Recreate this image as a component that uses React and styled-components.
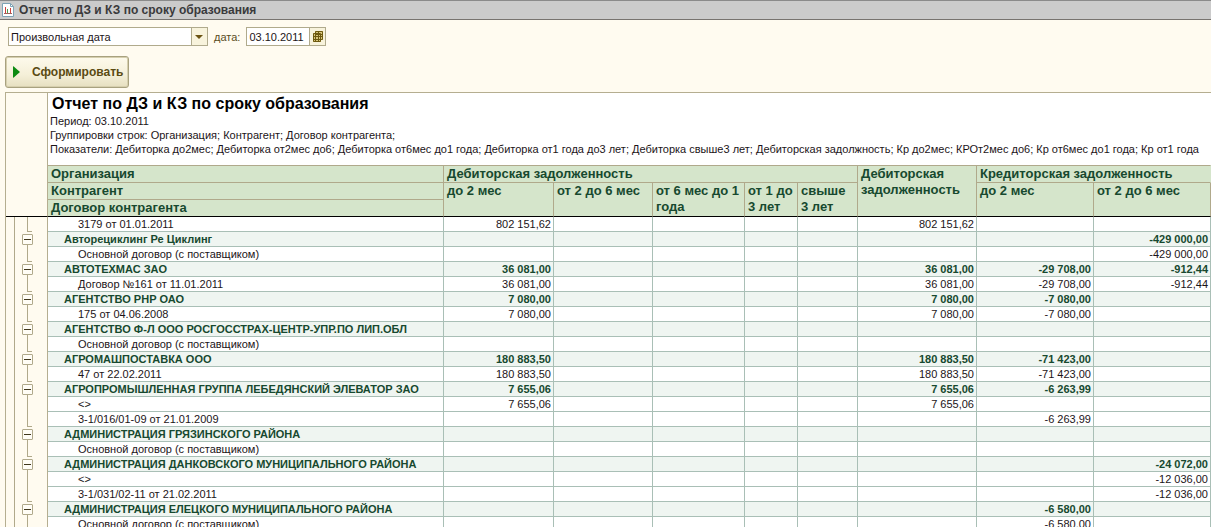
import React from "react";
import styled, { createGlobalStyle } from "styled-components";

const GlobalStyle = createGlobalStyle`
  * {
    box-sizing: border-box;
  }

  body {
    margin: 0;
    background: #fffbf0;
    font-family: "Liberation Sans", Arial, sans-serif;
    font-size: 11px;
    color: #1c1418;
  }

  button,
  input,
  select {
    font: inherit;
    color: inherit;
  }

  svg {
    flex: none;
  }
`;

const Window = styled.div`
  display: flex;
  flex-direction: column;
  height: 100vh;
  overflow: hidden;
`;

const TitleBar = styled.header`
  display: flex;
  flex: none;
  align-items: center;
  gap: 5px;
  height: 20px;
  padding: 0 2px;
  background: #cbcbcb;
  border-top: 1px solid #8a8a8a;
  border-bottom: 1px solid #77736f;
`;

const WindowTitle = styled.h1`
  margin: 0;
  font-size: 12px;
  font-weight: 700;
  line-height: 16px;
  color: #3a3a3c;
  white-space: nowrap;
`;

const Filters = styled.form`
  display: flex;
  flex: none;
  align-items: center;
  padding: 7px 8px 0;
`;

const SelectBox = styled.div`
  display: grid;
  grid-template-columns: 1fr 16px;
  width: 200px;
  height: 19px;
  border: 1px solid #b0aa8c;
  background: #fffbf0;
`;

const Select = styled.select`
  grid-row: 1;
  grid-column: 1 / -1;
  appearance: none;
  padding: 0 18px 0 2px;
  border: 0;
  outline: 0;
  background: linear-gradient(
    to left,
    #f8f3dc 15px,
    #b0aa8c 15px,
    #b0aa8c 16px,
    #ffffff 16px
  );
`;

const SelectArrow = styled.svg`
  grid-row: 1;
  grid-column: 2;
  place-self: center;
  pointer-events: none;
`;

const FieldLabel = styled.label`
  padding: 0 6px;
  color: #5a4d1e;
`;

const DateBox = styled.div`
  display: flex;
  width: 80px;
  height: 19px;
  border: 1px solid #b0aa8c;
  background: #ffffff;
`;

const DateInput = styled.input`
  flex: 1;
  min-width: 0;
  padding: 0 2px;
  border: 0;
  outline: 0;
  background: transparent;
`;

const CalendarButton = styled.button`
  display: flex;
  align-items: center;
  justify-content: center;
  width: 16px;
  padding: 0;
  border: 0;
  border-left: 1px solid #b0aa8c;
  background: #f8f3dc;
`;

const Actions = styled.div`
  display: flex;
  flex: none;
  padding: 10px 5px 4px;
`;

const RunButton = styled.button`
  display: flex;
  align-items: center;
  gap: 12px;
  width: 124px;
  height: 32px;
  padding: 0 4px 0 7px;
  border: 1px solid #a8a17f;
  border-radius: 3px;
  background: linear-gradient(#fdfaec, #f4efd8 60%, #e6dfc0);
  box-shadow: inset 0 0 0 1px #d6cfae;
  font-size: 12px;
  font-weight: 700;
  color: #5a4a12;
  white-space: nowrap;
`;

const Sheet = styled.main`
  flex: 1;
  min-height: 0;
  overflow: hidden;
  margin-left: 5px;
  border-top: 1px solid #b5ae90;
  border-left: 1px solid #b5ae90;
`;

const ReportHead = styled.div`
  display: grid;
  grid-template-columns: 42px 1fr;
  height: 72px;
`;

const ReportGutter = styled.div`
  background: #fffbf0;
  border-right: 1px solid #b5ae90;
`;

const ReportInfo = styled.div`
  min-width: 0;
  overflow: hidden;
  padding: 1px 2px 0;
  background: #ffffff;
`;

const ReportTitle = styled.h2`
  margin: 0;
  padding-left: 2px;
  font-size: 16px;
  line-height: 20px;
  color: #000000;
  white-space: nowrap;
`;

const InfoLine = styled.p`
  margin: 0;
  line-height: 14px;
  white-space: nowrap;
`;

const Table = styled.table`
  width: 100%;
  min-width: 1205px;
  table-layout: fixed;
  border-collapse: separate;
  border-spacing: 0;
  background: #ffffff;
`;

const HeadCell = styled.th`
  height: 17px;
  padding: 0 3px;
  border-right: 1px solid ${(p) => (p.$open ? "#d5e5cb" : "#b0a98b")};
  border-bottom: 1px solid ${(p) => (p.$last ? "#000000" : "#b0a98b")};
  background: #d5e5cb;
  font-size: 13px;
  line-height: 16px;
  font-weight: 700;
  text-align: left;
  vertical-align: top;
  color: #17492f;
`;

const HeadRow = styled.tr`
  &:first-child > th {
    border-top: 1px solid #b0a98b;
    height: 18px;
  }
`;

const HeadGutter = styled.td`
  padding: 0;
  border-right: 1px solid #b5ae90;
  border-bottom: 1px solid #000000;
  background: #fffbf0;
`;

const GutterCell = styled.td`
  height: 15px;
  padding: 0;
  border-right: 1px solid #b5ae90;
  background: #fffbf0;
`;

const Rails = styled.div`
  display: flex;
  height: 15px;
  padding-left: 8px;
`;

const OuterRail = styled.span`
  width: 8px;
  border-left: 1px solid #b0a98b;
`;

const Branch = styled.span`
  width: 5px;
  margin-left: 5px;
  border-left: 1px solid #b0a98b;
  border-bottom: ${(p) => (p.$end ? "1px solid #b0a98b" : "0")};
`;

const Node = styled.span`
  display: flex;
  flex-direction: column;
  align-items: center;
  padding-top: 2px;

  &::after {
    content: "";
    width: 1px;
    flex: 1;
    background: #b0a98b;
  }
`;

const Toggle = styled.button`
  display: flex;
  align-items: center;
  justify-content: center;
  width: 11px;
  height: 11px;
  padding: 0;
  border: 1px solid #b0a98b;
  border-radius: 1px;
  background: #fffdf6;

  &::before {
    content: "";
    width: 7px;
    height: 1px;
    background: #40371c;
  }
`;

const NameCell = styled.td`
  height: 15px;
  padding: 0 0 0 ${(p) => (p.$group ? 16 : 30)}px;
  border-right: 1px solid #a9bfb6;
  border-bottom: 1px solid #a9bfb6;
  line-height: 14px;
  white-space: nowrap;
`;

const AmountCell = styled.td`
  height: 15px;
  padding: 0 2px;
  border-right: 1px solid #a9bfb6;
  border-bottom: 1px solid #a9bfb6;
  line-height: 14px;
  text-align: right;
  white-space: nowrap;
`;

const Row = styled.tr`
  background: ${(p) => (p.$group ? "#eff5f1" : "#ffffff")};
  color: ${(p) => (p.$group ? "#17492f" : "#1c1418")};
  font-weight: ${(p) => (p.$group ? 700 : 400)};
`;

const COLUMN_WIDTHS = [110, 99, 92, 53, 60, 119, 117, 117];

// amounts are keyed by column: 0 - дебиторка до 2 мес, 5 - дебиторская всего,
// 6 - кредиторка до 2 мес, 7 - кредиторка от 2 до 6 мес
const rows = [
  { name: "3179 от 01.01.2011", amounts: { 0: "802 151,62", 5: "802 151,62" } },
  { group: true, name: "Авторециклинг Ре Циклинг", amounts: { 7: "-429 000,00" } },
  { name: "Основной договор (с поставщиком)", amounts: { 7: "-429 000,00" } },
  {
    group: true,
    name: "АВТОТЕХМАС ЗАО",
    amounts: { 0: "36 081,00", 5: "36 081,00", 6: "-29 708,00", 7: "-912,44" },
  },
  {
    name: "Договор №161 от 11.01.2011",
    amounts: { 0: "36 081,00", 5: "36 081,00", 6: "-29 708,00", 7: "-912,44" },
  },
  {
    group: true,
    name: "АГЕНТСТВО РНР ОАО",
    amounts: { 0: "7 080,00", 5: "7 080,00", 6: "-7 080,00" },
  },
  {
    name: "175 от 04.06.2008",
    amounts: { 0: "7 080,00", 5: "7 080,00", 6: "-7 080,00" },
  },
  {
    group: true,
    name: "АГЕНТСТВО Ф-Л ООО РОСГОССТРАХ-ЦЕНТР-УПР.ПО ЛИП.ОБЛ",
    amounts: {},
  },
  { name: "Основной договор (с поставщиком)", amounts: {} },
  {
    group: true,
    name: "АГРОМАШПОСТАВКА ООО",
    amounts: { 0: "180 883,50", 5: "180 883,50", 6: "-71 423,00" },
  },
  {
    name: "47 от 22.02.2011",
    amounts: { 0: "180 883,50", 5: "180 883,50", 6: "-71 423,00" },
  },
  {
    group: true,
    name: "АГРОПРОМЫШЛЕННАЯ ГРУППА ЛЕБЕДЯНСКИЙ ЭЛЕВАТОР ЗАО",
    amounts: { 0: "7 655,06", 5: "7 655,06", 6: "-6 263,99" },
  },
  { name: "<>", amounts: { 0: "7 655,06", 5: "7 655,06" } },
  { name: "3-1/016/01-09 от 21.01.2009", amounts: { 6: "-6 263,99" } },
  { group: true, name: "АДМИНИСТРАЦИЯ ГРЯЗИНСКОГО РАЙОНА", amounts: {} },
  { name: "Основной договор (с поставщиком)", amounts: {} },
  {
    group: true,
    name: "АДМИНИСТРАЦИЯ ДАНКОВСКОГО МУНИЦИПАЛЬНОГО РАЙОНА",
    amounts: { 7: "-24 072,00" },
  },
  { name: "<>", amounts: { 7: "-12 036,00" } },
  { name: "3-1/031/02-11 от 21.02.2011", amounts: { 7: "-12 036,00" } },
  {
    group: true,
    name: "АДМИНИСТРАЦИЯ ЕЛЕЦКОГО МУНИЦИПАЛЬНОГО РАЙОНА",
    amounts: { 6: "-6 580,00" },
  },
  { name: "Основной договор (с поставщиком)", amounts: { 6: "-6 580,00" } },
];

const ReportIcon = () => (
  <svg width="12" height="14" viewBox="0 0 12 14" aria-hidden="true">
    <path d="M0.5 0.5H8.5L11.5 3.5V13.5H0.5Z" fill="#ffffff" stroke="#7fa3b5" />
    <path d="M8.5 0.5V3.5H11.5" fill="none" stroke="#7fa3b5" />
    <path d="M3.5 4V10" stroke="#d0413a" strokeWidth="1" />
    <path d="M5.5 6V10" stroke="#4a9a4c" strokeWidth="1" />
    <path d="M8.5 5V10" stroke="#d0413a" strokeWidth="1" />
    <path d="M2 10.5H10" stroke="#a0605a" />
  </svg>
);

const CalendarIcon = () => (
  <svg width="10" height="11" viewBox="0 0 10 11" aria-hidden="true">
    <path d="M2 0H10V9H8V11H0V2H2Z" fill="#d8c67c" />
    <path
      d="M2.5 0.5H9.5V8.5H2.5ZM0.5 2.5H7.5V10.5H0.5ZM0.5 5.5H9.5M0.5 8.5H7.5M2.5 2.5V10.5M5.5 0.5V10.5M2.5 3.5H9.5"
      stroke="#6e5a10"
      fill="none"
    />
  </svg>
);

const OutlineCell = ({ group, end }) => (
  <GutterCell>
    <Rails>
      <OuterRail />
      {group ? (
        <Node>
          <Toggle type="button" aria-label="Свернуть группу" />
        </Node>
      ) : (
        <Branch $end={end} />
      )}
    </Rails>
  </GutterCell>
);

const ReportTable = () => (
  <Table>
    <colgroup>
      <col style={{ width: 42 }} />
      <col />
      {COLUMN_WIDTHS.map((width, i) => (
        <col key={i} style={{ width }} />
      ))}
    </colgroup>
    <thead>
      <HeadRow>
        <HeadGutter rowSpan={3} />
        <HeadCell>Организация</HeadCell>
        <HeadCell colSpan={5}>Дебиторская задолженность</HeadCell>
        <HeadCell rowSpan={3} $last>
          Дебиторская задолженность
        </HeadCell>
        <HeadCell colSpan={2} $open>
          Кредиторская задолженность
        </HeadCell>
      </HeadRow>
      <HeadRow>
        <HeadCell>Контрагент</HeadCell>
        <HeadCell rowSpan={2} $last>до 2 мес</HeadCell>
        <HeadCell rowSpan={2} $last>от 2 до 6 мес</HeadCell>
        <HeadCell rowSpan={2} $last>от 6 мес до 1 года</HeadCell>
        <HeadCell rowSpan={2} $last>от 1 до 3 лет</HeadCell>
        <HeadCell rowSpan={2} $last>свыше 3 лет</HeadCell>
        <HeadCell rowSpan={2} $last>до 2 мес</HeadCell>
        <HeadCell rowSpan={2} $last>от 2 до 6 мес</HeadCell>
      </HeadRow>
      <HeadRow>
        <HeadCell $last>Договор контрагента</HeadCell>
      </HeadRow>
    </thead>
    <tbody>
      {rows.map((row, i) => (
        <Row key={i} $group={row.group}>
          <OutlineCell group={row.group} end={rows[i + 1]?.group} />
          <NameCell $group={row.group}>{row.name}</NameCell>
          {COLUMN_WIDTHS.map((_, col) => (
            <AmountCell key={col}>{row.amounts[col]}</AmountCell>
          ))}
        </Row>
      ))}
    </tbody>
  </Table>
);

const App = () => (
  <Window>
    <GlobalStyle />
    <TitleBar>
      <ReportIcon />
      <WindowTitle>Отчет по ДЗ и КЗ по сроку образования</WindowTitle>
    </TitleBar>

    <Filters>
      <SelectBox>
        <Select aria-label="Вид даты" defaultValue="custom">
          <option value="custom">Произвольная дата</option>
        </Select>
        <SelectArrow width="8" height="4" viewBox="0 0 8 4" aria-hidden="true">
          <path d="M0 0H8L4 4Z" fill="#6b5312" />
        </SelectArrow>
      </SelectBox>
      <FieldLabel htmlFor="report-date">дата:</FieldLabel>
      <DateBox>
        <DateInput id="report-date" type="text" defaultValue="03.10.2011" />
        <CalendarButton type="button" aria-label="Выбрать дату">
          <CalendarIcon />
        </CalendarButton>
      </DateBox>
    </Filters>

    <Actions>
      <RunButton type="button">
        <svg width="7" height="12" viewBox="0 0 7 12" aria-hidden="true">
          <path d="M0 0L7 6L0 12Z" fill="#0c8a12" />
        </svg>
        Сформировать
      </RunButton>
    </Actions>

    <Sheet>
      <ReportHead>
        <ReportGutter />
        <ReportInfo>
          <ReportTitle>Отчет по ДЗ и КЗ по сроку образования</ReportTitle>
          <InfoLine>Период: 03.10.2011</InfoLine>
          <InfoLine>
            Группировки строк: Организация; Контрагент; Договор контрагента;
          </InfoLine>
          <InfoLine>
            Показатели: Дебиторка до2мес; Дебиторка от2мес до6; Дебиторка от6мес
            до1 года; Дебиторка от1 года до3 лет; Дебиторка свыше3 лет;
            Дебиторская задолжность; Кр до2мес; КРОт2мес до6; Кр от6мес до1
            года; Кр от1 года
          </InfoLine>
        </ReportInfo>
      </ReportHead>
      <ReportTable />
    </Sheet>
  </Window>
);

export default App;
